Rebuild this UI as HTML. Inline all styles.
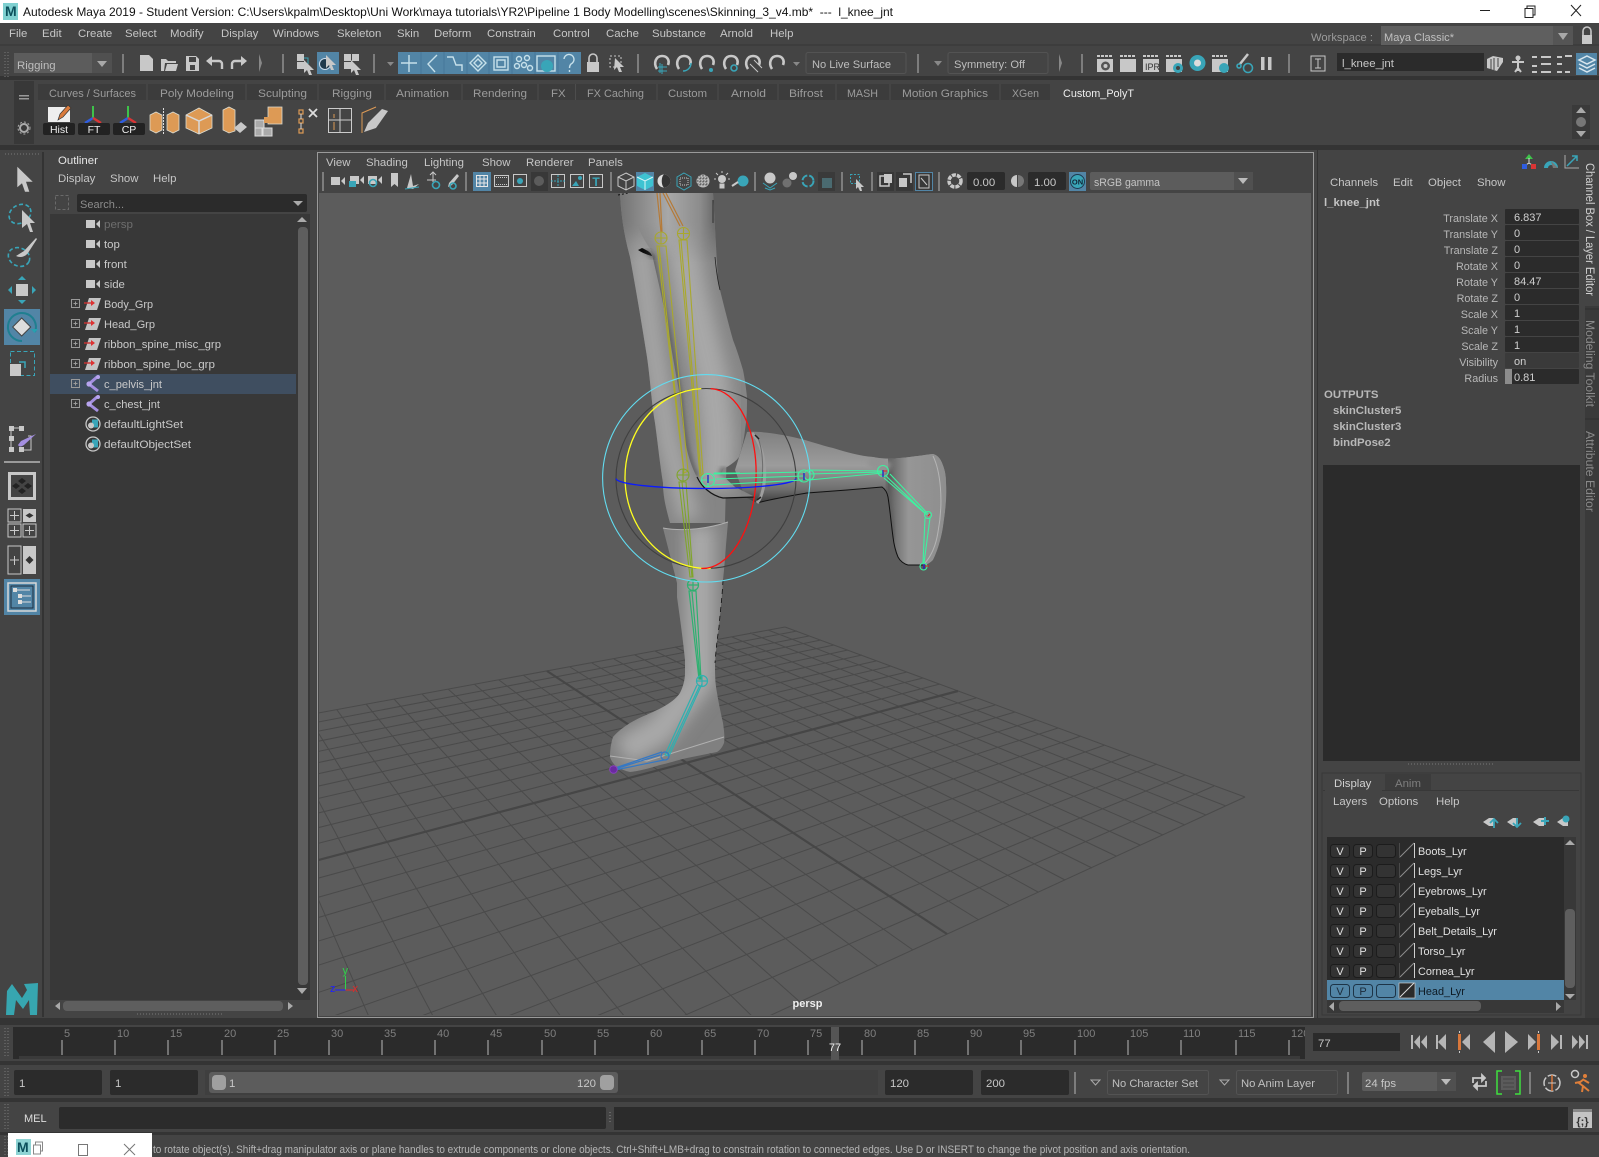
<!DOCTYPE html>
<html><head><meta charset="utf-8"><title>Autodesk Maya 2019</title>
<style>
html,body{margin:0;padding:0;background:#444;width:1599px;height:1157px;overflow:hidden}
svg{display:block;font-family:"Liberation Sans",sans-serif;font-size:11.4px}
.m{fill:#c6c6c6}.d{fill:#9b9b9b}.l{fill:#c9c9c9}
.i{fill:#c8c8c8}.s{fill:none;stroke:#c8c8c8;stroke-width:1.4}
.te{fill:#39a5b8}.ts{fill:none;stroke:#39a5b8;stroke-width:1.6}
.k{fill:#2b2b2b}.sep{fill:#7d7d7d}
</style></head><body>
<svg width="1599" height="1157" viewBox="0 0 1599 1157" xmlns="http://www.w3.org/2000/svg">
<defs>
<linearGradient id="gA" gradientUnits="userSpaceOnUse" x1="622" y1="0" x2="714" y2="0"><stop offset="0" stop-color="#767676"/><stop offset=".5" stop-color="#a8a8a8"/><stop offset=".85" stop-color="#8c8c8c"/><stop offset="1" stop-color="#6c6c6c"/></linearGradient>
<linearGradient id="gC" gradientUnits="userSpaceOnUse" x1="0" y1="435" x2="0" y2="503"><stop offset="0" stop-color="#838383"/><stop offset=".45" stop-color="#9c9c9c"/><stop offset=".8" stop-color="#6e6e6e"/><stop offset="1" stop-color="#3c3c3c"/></linearGradient>
<linearGradient id="gF" gradientUnits="userSpaceOnUse" x1="888" y1="0" x2="946" y2="0"><stop offset="0" stop-color="#5f5f5f"/><stop offset=".35" stop-color="#969696"/><stop offset="1" stop-color="#8e8e8e"/></linearGradient>
<linearGradient id="vf" gradientUnits="userSpaceOnUse" x1="0" y1="222" x2="0" y2="262"><stop offset="0" stop-color="#fff"/><stop offset="1" stop-color="#000"/></linearGradient>
<linearGradient id="vg" gradientUnits="userSpaceOnUse" x1="0" y1="455" x2="0" y2="490"><stop offset="0" stop-color="#000"/><stop offset="1" stop-color="#fff"/></linearGradient>
<mask id="fade" maskUnits="userSpaceOnUse" x="600" y="190" width="140" height="80"><rect x="600" y="190" width="140" height="80" fill="url(#vf)"/></mask>
<filter id="b8" x="-50%" y="-20%" width="200%" height="140%"><feGaussianBlur stdDeviation="8"/></filter>
<filter id="b3" x="-50%" y="-20%" width="200%" height="140%"><feGaussianBlur stdDeviation="2.5"/></filter>
<path id="pStand" d="M620 193C621 215 624 235 630 257C636 290 642 325 647 357C651 385 651 400 655 423C658 445 660 465 663 483C663 495 665 505 670 523L725 523L727 440L713 193Z"/>
<path id="pBent" d="M651 250C658 280 665 310 670 340C675 370 678 385 680 397C682 420 684 435 687 450C690 462 693 470 697 477C700 483 703 487 707 490C713 495 718 497 723 498L755 497L735 487L722 475C722 470 724 468 727 467C733 463 736 461 739 457C742 448 744 440 745 430C747 418 747 408 747 397C746 388 745 380 743 370C740 360 737 350 733 340C728 322 724 306 720 290C717 278 716 268 715 257C714 245 714 235 713 223L712 193L628 193C632 215 640 235 651 250Z"/>
<path id="pHoriz" d="M747 432C760 431 780 434 797 438C810 441 820 445 833 448C846 452 860 456 873 457C882 459 892 459 900 458C912 457 924 455 933 454C937 455 940 458 942 463C945 470 946 476 946 483C947 500 945 513 943 527C941 540 937 552 933 560C930 563 927 565 923 565L908 565C904 564 900 561 898 557C895 550 894 545 893 537C891 522 890 510 888 497C887 492 885 489 882 487C870 488 858 489 847 490C834 491 820 492 807 493C790 496 772 499 757 503L745 497L735 470Z"/>
<path id="pBoot" d="M663 528C685 532 710 528 728 522L726 545C725 560 724 570 723 580C722 600 720 613 719 627C717 640 716 650 715 663C715 675 715 682 717 693C719 705 721 714 723 723C724 730 725 737 724 743C722 748 720 750 717 752C707 754 697 756 687 758C678 760 669 763 660 765C650 768 640 771 630 772C625 771 621 769 617 767C613 764 611 760 610 757C610 750 611 743 613 737C618 731 624 727 630 723C640 717 652 713 663 707C670 703 676 699 680 693C683 687 685 680 685 673L685 660C683 640 680 618 677 597L677 583Z"/>
<clipPath id="cStand"><use href="#pStand"/></clipPath>
<clipPath id="cBent"><use href="#pBent"/></clipPath>
<clipPath id="cHoriz"><use href="#pHoriz"/></clipPath>
<clipPath id="cBoot"><use href="#pBoot"/></clipPath>
<clipPath id="vp"><rect x="319" y="193" width="992" height="822"/></clipPath>
<symbol id="cam" viewBox="0 0 14 10" overflow="visible"><rect x="0" y="1" width="9" height="8" fill="#c8c8c8"/><path d="M10 5l4-4v8z" fill="#c8c8c8"/></symbol>
<symbol id="grp" viewBox="0 0 16 12" overflow="visible"><path d="M4 0h12l-4 12H0z" fill="#c4c4c4"/><path d="M-1 5h10" stroke="#c33" stroke-width="1.4"/><path d="M6 2l4 3-4 3z" fill="#d33"/></symbol>
<symbol id="jnt" viewBox="0 0 14 18" overflow="visible"><path d="M11 2L3 9l9 7" fill="none" stroke="#a48fe0" stroke-width="3"/><circle cx="12" cy="2" r="2" fill="#b7a4ee"/><circle cx="3" cy="9" r="2.6" fill="#b7a4ee"/></symbol>
<symbol id="set" viewBox="0 0 16 16" overflow="visible"><circle cx="8" cy="8" r="7" fill="none" stroke="#c8c8c8" stroke-width="1.3"/><rect x="7" y="3.5" width="6" height="8" fill="#39a5b8"/><circle cx="6" cy="9.5" r="3" fill="#c8c8c8"/></symbol>
<symbol id="clap" viewBox="0 0 17 17" overflow="visible"><path d="M0 0h3v2H0zM4 0h3v2H4zM8 0h3v2H8zM12 0h3v2h-3z" fill="#c8c8c8"/><rect x="0" y="4" width="16" height="13" fill="#c8c8c8"/></symbol>
<symbol id="magnet" viewBox="0 0 16 18" overflow="visible"><path d="M3 14C-1 8 2 1 8 1c5 0 8 4 6 9" fill="none" stroke="#c8c8c8" stroke-width="2.6"/></symbol>
</defs>

<!-- base -->
<rect width="1599" height="1157" fill="#444"/>
<rect width="1599" height="23" fill="#fff"/>
<!-- title -->
<rect x="3" y="3" width="15" height="17" fill="#7fd0d0"/>
<text x="5" y="16" font-size="14" font-weight="bold" fill="#0b4f5b">M</text>
<text x="23" y="16" font-size="12" fill="#111" textLength="870" lengthAdjust="spacingAndGlyphs" xml:space="preserve">Autodesk Maya 2019 - Student Version: C:\Users\kpalm\Desktop\Uni Work\maya tutorials\YR2\Pipeline 1 Body Modelling\scenes\Skinning_3_v4.mb*  ---  l_knee_jnt</text>
<path d="M1480 10.500h10" stroke="#222"/>
<path d="M1525 8.500h8v9h-8zM1527 8.500v-2.500h8v9h-2" fill="none" stroke="#222"/>
<path d="M1571 5l10 11M1581 5l-10 11" stroke="#222" fill="none"/>

<!-- separators -->
<rect y="44" width="1599" height="2" fill="#3d3d3d"/>
<rect y="76" width="1599" height="4" fill="#343434"/>
<rect y="145" width="1599" height="5" fill="#343434"/>
<rect y="1018" width="1599" height="7" fill="#343434"/>
<rect y="1061" width="1599" height="4" fill="#343434"/>
<rect y="1098" width="1599" height="4" fill="#343434"/>
<rect y="1132" width="1599" height="3" fill="#343434"/>

<!-- menu -->
<g class="m">
<text x="9" y="37">File</text><text x="42" y="37">Edit</text><text x="78" y="37">Create</text><text x="125" y="37">Select</text><text x="170" y="37">Modify</text><text x="221" y="37">Display</text><text x="273" y="37">Windows</text><text x="337" y="37">Skeleton</text><text x="397" y="37">Skin</text><text x="434" y="37">Deform</text><text x="487" y="37">Constrain</text><text x="553" y="37">Control</text><text x="606" y="37">Cache</text><text x="652" y="37">Substance</text><text x="720" y="37">Arnold</text><text x="770" y="37">Help</text>
</g>
<text x="1311" y="41" class="d" textLength="62" lengthAdjust="spacingAndGlyphs">Workspace :</text>
<rect x="1381" y="26" width="192" height="19" fill="#5f5f5f"/><rect x="1553" y="26" width="20" height="19" fill="#555"/>
<text x="1384" y="41" fill="#c0c0c0" textLength="70" lengthAdjust="spacingAndGlyphs">Maya Classic*</text>
<path d="M1558 33h10l-5 7z" fill="#a8a8a8"/>
<path d="M1583 35v-4a4 4 0 0 1 8 0v4" fill="none" stroke="#c8c8c8" stroke-width="1.6"/><rect x="1582" y="35" width="10" height="9" class="i"/>

<!-- status line -->
<path d="M5 52v25M8 52v25" stroke="#777" stroke-dasharray="1 2"/>
<rect x="14" y="53" width="98" height="20" fill="#5c5c5c"/><rect x="92" y="53" width="20" height="20" fill="#505050"/>
<text x="17" y="69" fill="#bdbdbd">Rigging</text><path d="M97 61h10l-5 6z" fill="#a8a8a8"/>
<rect x="122" y="54" width="2" height="19" class="sep"/>
<path d="M140 55h9l4 4v12h-13z" class="i"/>
<path d="M161 71V59h5l2 2h8v2h-11l-1 8zM165 71l2-7h11l-2 7z" class="i"/>
<path d="M186 56h10l3 3v12h-13z" class="i"/><rect x="189" y="57" width="7" height="5" fill="#444"/><rect x="190" y="65" width="5" height="5" fill="#444"/>
<path d="M222 69v-5a3 3 0 0 0-3-3h-9" fill="none" stroke="#c8c8c8" stroke-width="2.4"/><path d="M212 56l-6 5 6 5z" class="i"/>
<path d="M232 69v-5a3 3 0 0 1 3-3h7" fill="none" stroke="#c8c8c8" stroke-width="2.4"/><path d="M241 56l6 5-6 5z" class="i"/>
<path d="M259 54l3 9-3 9z" fill="#888"/>
<rect x="282" y="54" width="2" height="19" class="sep"/>
<rect x="297" y="54" width="7" height="7" class="i"/><rect x="297" y="62" width="7" height="7" class="i"/><path d="M304 58h4v6" fill="none" stroke="#39a5b8"/><path d="M304 60l10 10h-4l2 5h-3l-2-5-3 3z" class="i"/>
<rect x="317" y="52" width="22" height="22" fill="#5285a6"/><circle cx="325" cy="64" r="5.500" fill="#1f3a4d" stroke="#cde" /><path d="M326 55l10 10h-4l2 5h-3l-2-5-3 3z" class="i"/>
<rect x="344" y="54" width="7" height="7" class="i"/><rect x="352" y="54" width="7" height="7" class="i"/><rect x="344" y="62" width="7" height="7" class="i"/><path d="M351 60l10 10h-4l2 5h-3l-2-5-3 3z" class="i"/>
<rect x="373" y="54" width="2" height="19" class="sep"/>
<path d="M387 62h7l-3.500 4z" fill="#888"/>
<rect x="398" y="52" width="183" height="22" fill="#5285a6"/>
<path d="M421 52v22M444 52v22M467 52v22M489 52v22M512 52v22M535 52v22M558 52v22" stroke="#47769a"/>
<g fill="none" stroke="#c6e0ea" stroke-width="1.400">
<path d="M409 55v17M401 63h16"/>
<path d="M437 55l-9 9 7 8"/>
<path d="M447 57h6l3 8h6v6"/>
<path d="M478 55l8 8-8 8-8-8zM478 59l4 4-4 4-4-4z"/>
<rect x="494" y="57" width="14" height="13"/><path d="M497 60h8v7h-8z"/>
<circle cx="519" cy="59" r="2.500"/><circle cx="527" cy="58" r="2.500"/><circle cx="517" cy="66" r="2.500"/><circle cx="524" cy="65" r="2.500"/><circle cx="530" cy="68" r="2.500"/>
<rect x="537" y="56" width="18" height="15"/>
<path d="M564 59a5 5 0 1 1 7 5c-1 1-1.500 2-1.500 4M569.500 70v2"/>
</g>
<circle cx="547" cy="66" r="6" fill="#39a5b8"/>
<path d="M589 62v-4a4 4 0 0 1 8 0v4" fill="none" stroke="#c8c8c8" stroke-width="1.600"/><rect x="587" y="62" width="12" height="10" class="i"/>
<rect x="610" y="56" width="11" height="11" fill="none" stroke="#c8c8c8" stroke-dasharray="2 2"/><path d="M615 58l9 9h-4l2 5h-3l-2-5-3 3z" class="i"/>
<rect x="637" y="54" width="2" height="19" class="sep"/>
<use href="#magnet" x="654" y="55" width="16" height="18"/><path d="M662 64v10M658 67h9M658 71h9M660 63v10" stroke="#39a5b8" fill="none"/>
<use href="#magnet" x="676" y="55" width="16" height="18"/><path d="M683 71c5 0 8-4 8-8" stroke="#39a5b8" fill="none" stroke-width="1.500"/>
<use href="#magnet" x="699" y="55" width="16" height="18"/><circle cx="711" cy="70" r="2" class="te"/>
<use href="#magnet" x="723" y="55" width="16" height="18"/><circle cx="734" cy="68" r="3" class="ts"/>
<use href="#magnet" x="745" y="55" width="16" height="18"/><path d="M750 64l8 8M754 60l8 8" stroke="#c8c8c8"/>
<use href="#magnet" x="769" y="55" width="16" height="18"/>
<path d="M793 62h7l-3.500 4z" fill="#888"/>
<rect x="806" y="52.500" width="100" height="21" rx="2" fill="none" stroke="#535353"/>
<text x="812" y="68" fill="#bdbdbd" textLength="79" lengthAdjust="spacingAndGlyphs">No Live Surface</text>
<rect x="917" y="54" width="2" height="19" class="sep"/><path d="M934 61h8l-4 5z" fill="#888"/>
<rect x="948" y="52.500" width="100" height="21" rx="2" fill="none" stroke="#535353"/>
<text x="954" y="68" fill="#bdbdbd" textLength="71" lengthAdjust="spacingAndGlyphs">Symmetry: Off</text>
<path d="M1059 54l3 9-3 9z" fill="#888"/>
<rect x="1081" y="54" width="2" height="19" class="sep"/>
<use href="#clap" x="1097" y="55" width="17" height="17"/><circle cx="1105.500" cy="66" r="4.500" fill="#555"/><circle cx="1105.500" cy="66" r="2" class="i"/>
<use href="#clap" x="1120" y="55" width="17" height="17"/>
<use href="#clap" x="1143" y="55" width="17" height="17"/><text x="1145" y="70" font-size="9" fill="#333">IPR</text>
<use href="#clap" x="1166" y="55" width="17" height="17"/><circle cx="1178" cy="68" r="5" fill="#39a5b8"/><circle cx="1178" cy="68" r="2" fill="#444"/>
<circle cx="1197.500" cy="63" r="8" class="te"/><circle cx="1197.500" cy="63" r="3.500" fill="#ddd"/>
<use href="#clap" x="1212" y="55" width="17" height="17"/><circle cx="1224" cy="68" r="5" class="te"/>
<path d="M1248 54l-8 10" stroke="#c8c8c8" stroke-width="2.500"/><circle cx="1248" cy="68" r="4.500" class="ts"/><circle cx="1239" cy="66" r="2" class="ts"/>
<rect x="1261" y="57" width="3.500" height="13" class="i"/><rect x="1268" y="57" width="3.500" height="13" class="i"/>
<rect x="1288" y="54" width="2" height="19" class="sep"/>
<rect x="1311" y="56" width="14" height="15" fill="none" stroke="#c8c8c8"/><path d="M1315 59h6M1318 59v9M1315 68h6" stroke="#c8c8c8"/>
<rect x="1337" y="53" width="147" height="18" fill="#2b2b2b"/><text x="1342" y="67" fill="#c8c8c8">l_knee_jnt</text>
<path d="M1487 59l6-3 10 2v4l-6 9-10-3z" class="i"/><path d="M1491 59v11M1494 58v12M1498 58v9" stroke="#444"/>
<circle cx="1518" cy="58" r="2.500" class="i"/><path d="M1518 60v11M1512 62h12M1515 72l3-4 3 4" stroke="#c8c8c8" stroke-width="2" fill="none"/>
<path d="M1532 57h5M1532 66h5M1532 72h5M1541 57h10M1541 64h10M1541 72h10" stroke="#c8c8c8" fill="none" stroke-width="2"/>
<path d="M1557 57h5M1557 64h5M1557 72h5M1565 56h7M1565 72h5" stroke="#c8c8c8" fill="none" stroke-width="2"/>
<rect x="1576" y="53" width="21" height="22" fill="#5285a6"/><path d="M1587 56l8 4-8 4-8-4zM1579 64l8 4 8-4M1579 68l8 4 8-4" fill="none" stroke="#d8e6ee" stroke-width="1.500"/>

<!-- shelf -->
<rect x="38" y="84" width="1014" height="16" fill="#3c3c3c"/>
<rect x="1052" y="84" width="92" height="16" fill="#444"/>
<path d="M147 84v16M246 84v16M318 84v16M385 84v16M462 84v16M538 84v16M575.500 84v16M657 84v16M718 84v16M778 84v16M836 84v16M890 84v16M1000 84v16M1051 84v16" stroke="#4d4d4d"/>
<rect x="14" y="81" width="20" height="63" fill="#383838"/>
<rect x="19" y="95" width="10" height="1.500" fill="#999"/><rect x="19" y="98" width="10" height="1.500" fill="#999"/>
<circle cx="24" cy="128" r="4" fill="none" stroke="#aaa" stroke-width="2"/><circle cx="24" cy="128" r="6" fill="none" stroke="#aaa" stroke-dasharray="2 2"/>
<g class="d">
<text x="49" y="97" textLength="87" lengthAdjust="spacingAndGlyphs">Curves / Surfaces</text><text x="160" y="97" textLength="74" lengthAdjust="spacingAndGlyphs">Poly Modeling</text><text x="258" y="97" textLength="49" lengthAdjust="spacingAndGlyphs">Sculpting</text><text x="332" y="97" textLength="40" lengthAdjust="spacingAndGlyphs">Rigging</text><text x="396" y="97" textLength="53" lengthAdjust="spacingAndGlyphs">Animation</text><text x="473" y="97" textLength="54" lengthAdjust="spacingAndGlyphs">Rendering</text><text x="551" y="97">FX</text><text x="587" y="97" textLength="57" lengthAdjust="spacingAndGlyphs">FX Caching</text><text x="668" y="97" textLength="39" lengthAdjust="spacingAndGlyphs">Custom</text><text x="731" y="97" textLength="35" lengthAdjust="spacingAndGlyphs">Arnold</text><text x="789" y="97" textLength="34" lengthAdjust="spacingAndGlyphs">Bifrost</text><text x="847" y="97" textLength="31" lengthAdjust="spacingAndGlyphs">MASH</text><text x="902" y="97" textLength="86" lengthAdjust="spacingAndGlyphs">Motion Graphics</text><text x="1012" y="97" textLength="27" lengthAdjust="spacingAndGlyphs">XGen</text>
</g>
<text x="1063" y="97" fill="#eee" textLength="71" lengthAdjust="spacingAndGlyphs">Custom_PolyT</text>
<path d="M48 107h22v15H48z" fill="#eee"/><path d="M58 120l2-6 8-9 3 3-8 9z" fill="#d97a3c" stroke="#333" stroke-width=".7"/>
<rect x="43" y="123" width="32" height="12" rx="2" fill="#222"/><text x="59" y="133" text-anchor="middle" font-size="10.500" fill="#eee">Hist</text>
<path d="M93 106v12" stroke="#3ec24a" stroke-width="2"/><path d="M93 118l-8 5" stroke="#2f5de0" stroke-width="2.500"/><path d="M93 118l8 5" stroke="#d93535" stroke-width="2.500"/>
<rect x="78" y="123" width="32" height="12" rx="2" fill="#222"/><text x="94" y="133" text-anchor="middle" font-size="10.500" fill="#eee">FT</text>
<path d="M128 106v12" stroke="#3ec24a" stroke-width="2"/><path d="M128 118l-8 5" stroke="#2f5de0" stroke-width="2.500"/><path d="M128 118l8 5" stroke="#d93535" stroke-width="2.500"/>
<rect x="113" y="123" width="32" height="12" rx="2" fill="#222"/><text x="129" y="133" text-anchor="middle" font-size="10.500" fill="#eee">CP</text>
<g fill="#dd9a55" stroke="#dddcd0" stroke-width=".8">
<path d="M150 115l6-3 6 3v15l-6 3-6-3zM167 115l6-3 6 3v15l-6 3-6-3z"/>
<path d="M199 108l13 7v13l-13 6-13-6v-13z"/>
<path d="M223 110l6-3 6 3v21l-6 2-6-3z"/>
<path d="M268 107h14v17h-14z"/>
</g>
<path d="M163.500 108v27" stroke="#ddd" stroke-dasharray="2 1"/>
<path d="M186 115l13 6 13-6M199 121v13" fill="none" stroke="#d8d8d8" stroke-width="1.500"/>
<path d="M234 128l7-6 6 5-7 6z" class="i"/>
<path d="M255 120h9v8h-9zM263 128h9v8h-9zM255 128h7v8h-7z" fill="#aaa" stroke="#ddd"/><rect x="264" y="117" width="6" height="6" fill="#dd9a55"/>
<rect x="299" y="110" width="4" height="4" fill="none" stroke="#dd9a55" stroke-width="1.200"/><rect x="299" y="119" width="4" height="4" fill="none" stroke="#dd9a55" stroke-width="1.200"/><rect x="299" y="129" width="4" height="4" fill="none" stroke="#dd9a55" stroke-width="1.200"/><path d="M301 114v5M301 123v6" stroke="#ddd"/>
<path d="M309 109l8 8M317 109l-8 8" stroke="#ddd" stroke-width="1.800"/>
<rect x="328.500" y="108.500" width="23" height="24" fill="none" stroke="#ccc"/><path d="M340 108v25M329 120h22" stroke="#ccc"/><path d="M334 114v4M334 122v8" stroke="#dd9a55"/>
<path d="M362 133v-20l14-6" fill="none" stroke="#dd9a55"/><path d="M364 132l4-9 14-14 6 2-12 17z" class="i"/>
<rect x="1572" y="105" width="18" height="34" fill="#3a3a3a"/><path d="M1581 107l-5 6h10zM1581 137l-5-6h10z" fill="#aaa"/><circle cx="1581" cy="122" r="5" fill="#777"/>

<!-- Left toolbox -->
<path d="M5 154h35" stroke="#777" stroke-dasharray="1 2"/>
<path d="M17.300 166.700L32.700 181.700H26L29.300 191.700H25L22 183.300L17.300 187.300z" class="i"/>
<ellipse cx="20" cy="214" rx="11.500" ry="9" transform="rotate(-30 20 214)" class="ts" stroke-dasharray="4 2.500"/><path d="M22 210l13 13h-5l3 9h-3l-3-8-5 4z" class="i"/>
<ellipse cx="19" cy="257" rx="11" ry="9" transform="rotate(25 19 257)" class="ts" stroke-dasharray="4 2.500"/><path d="M16 256l8-5 12-13 1 1-9 14c-3 4-8 5-12 3z" class="i"/>
<rect x="16" y="284" width="12" height="12" class="i"/><path d="M22 276l4 4h-8zM22 304l4-4h-8zM8 290l4-4v8zM36 290l-4-4v8z" class="te"/>
<rect x="4" y="309" width="36" height="36" fill="#5285a6"/><path d="M22 341a14 14 0 1 1 13-9" fill="none" stroke="#1f7f90" stroke-width="2"/><path d="M21.700 318l9 9-9 9-9-9z" fill="#ddd" stroke="#444"/><path d="M31 329h7l-3.500 4z" fill="#27a0b0"/>
<rect x="10.500" y="351.500" width="24" height="24" fill="none" stroke="#39a5b8" stroke-dasharray="4 2.500"/><rect x="10" y="364" width="11" height="12" class="i"/><path d="M19 362h6v6" fill="none" stroke="#39a5b8" stroke-width="1.500"/>
<g class="i"><rect x="9" y="426" width="5" height="5"/><rect x="19" y="426" width="5" height="5"/><rect x="9" y="436" width="5" height="5"/><rect x="9" y="447" width="5" height="5"/><rect x="19" y="447" width="5" height="5"/></g>
<path d="M14 428h5M11 431v5M11 441v6M28 436h3v14h-7" stroke="#c8c8c8" fill="none"/>
<path d="M36 434l-12 11c-3 2-5 2-6 0l3-4z" fill="#a48fe0"/>
<rect x="4" y="461" width="36" height="2" fill="#9a9a9a"/>
<rect x="8" y="472" width="28" height="28" class="i"/><rect x="11" y="475" width="22" height="22" fill="#444"/><path d="M22 478l4 3-4 3-4-3zM16 483l4 3-4 3-4-3zM28 483l4 3-4 3-4-3zM22 488l4 3-4 3-4-3z" fill="#222"/>
<rect x="8" y="509" width="13" height="13" fill="none" stroke="#c8c8c8"/><rect x="23" y="509" width="13" height="13" class="i"/><rect x="8" y="524" width="13" height="13" fill="none" stroke="#c8c8c8"/><rect x="23" y="524" width="13" height="13" fill="none" stroke="#c8c8c8"/><path d="M10 515.500h9M14.500 511v9M10 530.500h9M14.500 526v9M25 530.500h9M29.500 526v9" stroke="#c8c8c8"/><path d="M29.500 513l4 2.500-4 2.500-4-2.500z" fill="#333"/>
<rect x="8" y="546" width="13" height="28" fill="none" stroke="#c8c8c8"/><rect x="23" y="546" width="13" height="28" class="i"/><path d="M10 560h9M14.500 556v9" stroke="#c8c8c8"/><path d="M29.500 556l4 4-4 4-4-4z" fill="#333"/>
<rect x="4" y="579" width="36" height="36" fill="#5285a6"/><rect x="8" y="583" width="28" height="28" fill="none" stroke="#d8d8d8" stroke-width="1.500"/><rect x="11" y="586" width="22" height="22" fill="none" stroke="#1d2f40"/><rect x="13" y="588" width="4" height="4" fill="#ddd"/><rect x="18" y="594" width="4" height="4" fill="#ddd"/><rect x="18" y="600" width="4" height="4" fill="#ddd"/><path d="M17 590h13M22 596h9M22 602h9" stroke="#ddd"/>
<path d="M6 1015l1-24 5-7 10 14 5-8-3-6 14-1-1 32h-7l-1-15-6 9-7-9-2 15z" fill="#37a6b0"/>
<path d="M43 152v865" stroke="#333" stroke-width="2"/>

<!-- Outliner -->
<rect x="46" y="167" width="266" height="850" fill="#444"/>
<rect x="48" y="151" width="64" height="17" fill="#444"/>
<text x="58" y="164" fill="#e6e6e6">Outliner</text>
<g class="m"><text x="58" y="182">Display</text><text x="110" y="182">Show</text><text x="153" y="182">Help</text></g>
<rect x="55.500" y="195.500" width="13" height="14" fill="none" stroke="#6a6a6a" stroke-dasharray="3 2"/>
<rect x="77" y="194" width="230" height="18" rx="2" fill="#2b2b2b"/>
<text x="80" y="208" fill="#8c8c8c" font-size="11">Search...</text><path d="M293 201h10l-5 5z" fill="#aaa"/>
<rect x="50" y="214" width="260" height="786" fill="#383838"/>
<rect x="50" y="374" width="246" height="20" fill="#3f4e60"/>
<path d="M302 217l-5 5h10z" fill="#aaa"/>
<rect x="298" y="227" width="10" height="758" rx="4" fill="#5e5e5e"/>
<path d="M297 988h10l-5 6z" fill="#aaa"/>
<rect x="50" y="1000" width="260" height="13" fill="#444"/>
<path d="M60 1002v8l-5-4zM288 1002v8l5-4z" fill="#aaa"/>
<rect x="63" y="1001" width="220" height="10" rx="4" fill="#5e5e5e"/>
<path d="M137 1014h85" stroke="#777" stroke-dasharray="1 2"/>
<use href="#cam" x="86" y="219" width="14" height="10"/><use href="#cam" x="86" y="239" width="14" height="10"/><use href="#cam" x="86" y="259" width="14" height="10"/><use href="#cam" x="86" y="279" width="14" height="10"/>
<use href="#grp" x="85" y="298" width="16" height="12"/><use href="#grp" x="85" y="318" width="16" height="12"/><use href="#grp" x="85" y="338" width="16" height="12"/><use href="#grp" x="85" y="358" width="16" height="12"/>
<use href="#jnt" x="86" y="375" width="14" height="18"/><use href="#jnt" x="86" y="395" width="14" height="18"/>
<use href="#set" x="85" y="416" width="16" height="16"/><use href="#set" x="85" y="436" width="16" height="16"/>
<g fill="none" stroke="#9a9a9a">
<path d="M71.500 299.500h8v8h-8zM73.500 303.500h4M75.500 301.500v4M71.500 319.500h8v8h-8zM73.500 323.500h4M75.500 321.500v4M71.500 339.500h8v8h-8zM73.500 343.500h4M75.500 341.500v4M71.500 359.500h8v8h-8zM73.500 363.500h4M75.500 361.500v4M71.500 379.500h8v8h-8zM73.500 383.500h4M75.500 381.500v4M71.500 399.500h8v8h-8zM73.500 403.500h4M75.500 401.500v4"/>
</g>
<text x="104" y="228" fill="#6e6e6e" textLength="29" lengthAdjust="spacingAndGlyphs">persp</text>
<g class="l"><text x="104" y="248">top</text><text x="104" y="268">front</text><text x="104" y="288">side</text><text x="104" y="308" textLength="49" lengthAdjust="spacingAndGlyphs">Body_Grp</text><text x="104" y="328" textLength="51" lengthAdjust="spacingAndGlyphs">Head_Grp</text><text x="104" y="348" textLength="117" lengthAdjust="spacingAndGlyphs">ribbon_spine_misc_grp</text><text x="104" y="368" textLength="111" lengthAdjust="spacingAndGlyphs">ribbon_spine_loc_grp</text><text x="104" y="388" textLength="58" lengthAdjust="spacingAndGlyphs">c_pelvis_jnt</text><text x="104" y="408" textLength="56" lengthAdjust="spacingAndGlyphs">c_chest_jnt</text><text x="104" y="428" textLength="79" lengthAdjust="spacingAndGlyphs">defaultLightSet</text><text x="104" y="448" textLength="87" lengthAdjust="spacingAndGlyphs">defaultObjectSet</text></g>

<!-- Viewport frame -->
<rect x="317.500" y="152.500" width="996" height="865" fill="#444" stroke="#9a9a9a"/>
<g class="m"><text x="326" y="166">View</text><text x="366" y="166">Shading</text><text x="424" y="166">Lighting</text><text x="482" y="166">Show</text><text x="526" y="166">Renderer</text><text x="588" y="166">Panels</text></g>
<rect x="319" y="193" width="992" height="823" fill="#5c5c5c"/>

<g clip-path="url(#vp)">
<!-- grid -->
<path fill="none" stroke="#4a4a4a" stroke-width="1" d="
M785 627L210 733M797 631L213 742M809 636L216 751M821 640L220 761M834 645L223 771M848 650L227 782M862 655L230 793M876 661L234 805M891 666L238 817M907 672L243 831M923 678L248 845M940 684L253 860M976 698L264 893M995 705L270 911M1015 712L276 930M1036 720L283 952M1058 728L291 974M1081 736L299 999M1105 745L308 1025M1130 755L318 1054M1157 764L328 1086M1185 775L340 1121M1214 786L353 1159M1245 797L367 1201
M785 627L1245 797M768 630L1226 806M750 633L1206 815M732 637L1185 825M714 640L1163 835M695 644L1140 845M675 647L1116 856M655 651L1092 868M635 655L1065 880M614 659L1038 892M592 663L1009 905M570 667L979 920M523 675L913 950M499 680L878 966M474 684L840 983M448 689L800 1002M422 694L757 1021M394 699L712 1042M366 704L664 1064M337 710L613 1088M307 715L558 1113M276 721L499 1140M244 727L435 1170M210 733L367 1201"/>
<path fill="none" stroke="#464646" stroke-width="2.200" d="M958 691L258 876M547 671L947 934"/>

<!-- standing thigh and knee -->
<use href="#pStand" fill="#858585"/>
<g clip-path="url(#cStand)"><path d="M638 230L652 340L668 440L690 520" fill="none" stroke="#a6a6a6" stroke-width="22" filter="url(#b8)"/></g>
<!-- horizontal boot -->
<use href="#pHoriz" fill="url(#gC)"/>
<g clip-path="url(#cHoriz)">
<rect x="888" y="440" width="62" height="130" fill="url(#gF)"/>
<path d="M889 470L888 500L893 540" fill="none" stroke="#5a5a5a" stroke-width="4" filter="url(#b3)"/>
<path d="M870 458L888 470" stroke="#939393" stroke-width="14" filter="url(#b3)"/>
</g>
<path d="M933 456C940 470 944 500 938 532C936 545 932 555 925 563" fill="none" stroke="#b4b4b4"/>
<path d="M757 503C772 499 790 496 807 493C820 492 834 491 847 490C858 489 870 488 882 487C885 489 887 492 888 497C890 510 891 522 893 537C894 545 895 550 898 557C900 561 904 564 908 565L923 565" fill="none" stroke="#111" stroke-width="1"/>
<path d="M752 433C768 450 768 490 757 503" fill="none" stroke="#9e9e9e" stroke-width="3"/>
<path d="M757 436c6 12 8 36 2 62" fill="none" stroke="#6d6d6d"/>
<path d="M755 435l4 4M757 500l4-3" stroke="#222" stroke-width="1.500"/>
<!-- bent thigh -->
<use href="#pBent" fill="#858585"/>
<g clip-path="url(#cBent)">
<path d="M672 193L690 290L712 380L718 440L716 490" fill="none" stroke="#a8a8a8" stroke-width="34" filter="url(#b8)"/>
<path d="M720 470L740 480L755 492" fill="none" stroke="#6d6d6d" stroke-width="8" filter="url(#b3)"/>
<path d="M652 256C658 285 665 315 670 340C675 370 678 385 680 397C682 420 684 435 687 450C690 462 693 470 697 477" fill="none" stroke="#5e5e5e" stroke-width="5" filter="url(#b3)"/>
</g>
<g mask="url(#fade)"><use href="#pStand" fill="url(#gA)"/></g>
<path d="M642 248c4 2 9 4 10 8c-4-1-10-3-14-6z" fill="#0c0c0c"/>
<path d="M646 250l8 8" stroke="#333" stroke-width="2" filter="url(#b3)"/>
<path d="M713 200L713 223M715 257C716 268 717 278 720 290" fill="none" stroke="#222" stroke-width=".8"/>
<path d="M618 195l15-3" stroke="#111" stroke-dasharray="2 2"/>
<path d="M697 477C700 483 703 487 707 490C713 495 718 497 723 498L755 497" fill="none" stroke="#151515" stroke-width="1.200"/>
<!-- standing boot -->
<use href="#pBoot" fill="#808080"/>
<g clip-path="url(#cBoot)">
<path d="M700 525L700 680L660 730L622 752" fill="none" stroke="#a9a9a9" stroke-width="30" filter="url(#b8)"/>
</g>
<path d="M610 756L647 761L724 737" fill="none" stroke="#b0b0b0" stroke-width="1"/>
<path d="M723 580C722 600 720 613 719 627C717 640 716 650 715 663" fill="none" stroke="#111" stroke-width=".8" stroke-dasharray="5 4"/>
<path d="M663 528C685 532 710 528 728 522" fill="none" stroke="#b0b0b0"/>

<!-- skeleton -->
<g fill="none" stroke="#b57a37" stroke-width="1.200">
<path d="M657 193L661 232M663 193L680 226M666 193L683 226M660 193L662 232"/>
</g>
<g fill="none" stroke="#a9a82c" stroke-width="1.100">
<circle cx="661" cy="238" r="6"/><path d="M655 238h12M661 232v12"/>
<circle cx="683.500" cy="233.500" r="6"/><path d="M677.500 233.500h12M683.500 227.500v12"/>
<path d="M657 246h9l22 225-4 2zM659 246l25 225"/>
<path d="M679 240h8l16 234-3 2zM681 240l20 234"/>
</g>
<g fill="none" stroke="#80a52c" stroke-width="1.100">
<circle cx="683" cy="475" r="6"/><path d="M677 475h12M683 469v12"/>
<path d="M679 482h7l7 95h-3zM682 482l10 95"/>
</g>
<g fill="none" stroke="#2eb070" stroke-width="1.200">
<circle cx="693" cy="585" r="5.500"/><path d="M687.500 585h11M693 579.500v11"/>
<path d="M689 591h7l5 88h-2zM692 592l8 87"/>
</g>
<g fill="none" stroke="#2fb0b0" stroke-width="1.200">
<circle cx="702" cy="681" r="5.500"/><path d="M696.500 681h11M702 675.500v11"/>
<path d="M697 685l-32 70 4 1 33-72M700 685l-33 71"/>
</g>
<g fill="none" stroke="#3578c4" stroke-width="1.200">
<circle cx="665" cy="756" r="4"/><path d="M662 752L615 768M664 760L615 770M660 755L615 769"/>
</g>
<circle cx="613.500" cy="769.500" r="3.800" fill="#6a2aa0" stroke="#8a40c0"/>
<!-- gimbal -->
<ellipse cx="706" cy="478.500" rx="90" ry="90" fill="none" stroke="#404040" stroke-width="1.100"/>
<path d="M706 388.500a81 90 0 0 0 0 180" fill="none" stroke="#ffff20" stroke-width="1.300" transform="rotate(-3 706 478)"/>
<path d="M706 388.500a50 90 0 0 1 0 180" fill="none" stroke="#ff1010" stroke-width="1.300" transform="rotate(3 706 478)"/>
<path d="M616 478.500a90 10 0 0 0 180 0" fill="none" stroke="#0a1aff" stroke-width="1.300"/>
<circle cx="706.300" cy="478.300" r="103.700" fill="none" stroke="#62dcf0" stroke-width="1.100"/>
<g fill="none" stroke="#3df2a0" stroke-width="1.100">
<circle cx="708" cy="480" r="6.500"/><path d="M701.500 480h13M708 473.500v13"/>
<circle cx="804" cy="476" r="6"/><circle cx="809" cy="475" r="5"/>
<path d="M713 474L804 472M713 485L803 480M716 479L803 476M714 473L740 473"/>
<path d="M809 470L883 471M809 480L883 473M809 474L883 472"/>
<circle cx="883" cy="471" r="5.500"/>
<path d="M884 478L927 515M890 474L928 514M886 476L927 515"/>
<circle cx="928" cy="515" r="3.500"/>
<path d="M925 518L923 563M930 518L924 563"/>
<circle cx="923.500" cy="566.500" r="3.500"/>
</g>
<path d="M708 475v8M804 473v7M883 470v7M924 564v5" stroke="#1018d0" stroke-width="1.200"/>
<path d="M883 471h4M928 516l2-2M925 566h4" stroke="#e02020"/>
<!-- axis -->
<path d="M345.500 990V976" stroke="#2fd24a"/><path d="M345.500 990H354" stroke="#e02a2a"/><path d="M345.500 990H335" stroke="#2020ff"/>
<text x="342.500" y="974" font-size="11" fill="#2fd24a">y</text><text x="352.500" y="992" font-size="11" fill="#e02a2a">x</text><text x="330" y="992" font-size="11" fill="#2020ff">z</text>
<text x="807.500" y="1007" text-anchor="middle" font-size="11" font-weight="bold" fill="#eee">persp</text>
</g>

<!-- viewport toolbar -->
<rect x="322" y="172" width="2" height="19" class="sep"/>
<use href="#cam" x="331" y="176" width="14" height="10"/>
<use href="#cam" x="350" y="175" width="14" height="10"/><rect x="349" y="181" width="7" height="6" class="te"/>
<use href="#cam" x="368" y="175" width="14" height="10"/><circle cx="373" cy="183" r="3.500" class="ts"/>
<path d="M391 173h7v14l-3.500-3-3.500 3z" class="i"/>
<path d="M407 188l4-14 2 12 6-2-6 5z" class="i"/><path d="M405 189l14-2" stroke="#39a5b8"/>
<path d="M433 172v10M430 175l3-3 3 3M427 180h9" stroke="#c8c8c8" fill="none"/><circle cx="436" cy="185" r="3.500" class="ts"/>
<path d="M457 174l-8 9-1 4 4-2 7-9z" class="i"/><circle cx="453" cy="186" r="3" class="ts"/>
<rect x="465" y="172" width="2" height="19" class="sep"/>
<rect x="473" y="172" width="18" height="19" fill="#5285a6"/><rect x="476.500" y="175.500" width="11" height="11" fill="none" stroke="#e8e8e8"/><path d="M480 175v11M484 175v11M476 179h11M476 183h11" stroke="#e8e8e8"/>
<rect x="494.500" y="175.500" width="14" height="11" fill="none" stroke="#c8c8c8"/><path d="M494 177.500h15M494 184.500h15" stroke="#c8c8c8" stroke-dasharray="1 1"/>
<rect x="513.500" y="174.500" width="13" height="12" fill="none" stroke="#c8c8c8"/><circle cx="520" cy="181" r="3" class="te"/>
<rect x="531" y="172" width="17" height="19" fill="#383838"/><circle cx="539" cy="181" r="5" fill="#5c5c5c"/>
<rect x="551.500" y="174.500" width="13" height="13" fill="none" stroke="#c8c8c8"/><path d="M551 181h14M558 175v12" stroke="#39a5b8" stroke-dasharray="2 1"/>
<rect x="570.500" y="174.500" width="13" height="13" fill="none" stroke="#c8c8c8"/><path d="M572 186l4-5 3 5z" class="te"/><circle cx="580" cy="178" r="2" class="te"/>
<rect x="589.500" y="174.500" width="13" height="13" fill="none" stroke="#c8c8c8"/><text x="596" y="186" text-anchor="middle" font-size="12" font-weight="bold" fill="#39a5b8">T</text>
<rect x="610" y="172" width="2" height="19" class="sep"/>
<path d="M626 173l8 4v9l-8 4-8-4v-9zM618 177l8 4 8-4M626 181v9" fill="none" stroke="#c8c8c8"/>
<rect x="636" y="172" width="18" height="19" fill="#5285a6"/><path d="M645 173l8 4v9l-8 4-8-4v-9z" fill="#3ec3d2"/><path d="M637 177l8 4 8-4M645 181v9" fill="none" stroke="#d8f4f8"/>
<circle cx="664" cy="181" r="6.500" fill="#ddd"/><path d="M664 174.500a6.500 6.500 0 0 1 0 13c-3-2-3-11 0-13z" fill="#333"/>
<path d="M684 173l7 4v9l-7 4-7-4v-9z" fill="none" stroke="#39a5b8"/><path d="M680 178h8v7h-8z" fill="none" stroke="#c8c8c8" stroke-dasharray="1 1"/>
<circle cx="703" cy="181" r="6.500" fill="#bbb"/><path d="M697 178h12M697 181h12M697 184h12M700 175v12M703 175v12M706 175v12" stroke="#444" stroke-dasharray="1.500 1.500"/>
<circle cx="722" cy="179" r="4" class="i"/><path d="M720 184h4v4h-4zM714 179h2M728 179h2M716 173l2 2M728 173l-2 2M722 171v2" stroke="#c8c8c8" fill="#c8c8c8"/>
<circle cx="743" cy="181" r="5.500" class="te"/><path d="M732 186l6-4" stroke="#c8c8c8" stroke-width="2"/>
<rect x="754" y="172" width="2" height="19" class="sep"/>
<circle cx="770" cy="178" r="5.500" class="i"/><path d="M763 183l7 5 7-5M765 188l5 2 5-2" stroke="#39a5b8" fill="none"/>
<circle cx="793" cy="176" r="4" class="i"/><circle cx="787" cy="183" r="4.500" fill="#707070"/>
<circle cx="808" cy="181" r="5.500" fill="none" stroke="#39a5b8" stroke-width="2" stroke-dasharray="7 2"/>
<rect x="818" y="172" width="17" height="19" fill="#3a3a3a"/><rect x="822" y="178" width="10" height="10" fill="#4a6a70"/>
<rect x="841" y="172" width="2" height="19" class="sep"/>
<rect x="850.500" y="174.500" width="9" height="9" fill="none" stroke="#39a5b8" stroke-dasharray="2 1.500"/><path d="M856 179l8 8h-3l1 4h-2l-2-4-2 2z" class="i"/>
<rect x="871" y="172" width="2" height="19" class="sep"/>
<rect x="877" y="172" width="17" height="19" fill="#383838"/><rect x="880" y="176" width="9" height="10" fill="none" stroke="#c8c8c8" stroke-width="1.500"/><rect x="884" y="174" width="8" height="9" class="i"/>
<rect x="896" y="172" width="17" height="19" fill="#383838"/><rect x="899" y="178" width="8" height="9" class="i"/><path d="M903 174h8v9" fill="none" stroke="#c8c8c8" stroke-width="1.500"/>
<rect x="915.500" y="172.500" width="17" height="18" fill="#383838" stroke="#5285a6"/><rect x="919" y="175" width="10" height="13" fill="none" stroke="#c8c8c8"/><path d="M921 178l6 7" stroke="#c8c8c8"/>
<rect x="938" y="172" width="2" height="19" class="sep"/>
<circle cx="955" cy="181" r="6" fill="none" stroke="#c8c8c8" stroke-width="3.500" stroke-dasharray="4 1"/>
<rect x="967" y="172" width="38" height="18" rx="2" fill="#2b2b2b"/><text x="973" y="186" fill="#c8c8c8">0.00</text>
<path d="M1017 175a6 6 0 0 0 0 12z" class="i"/><path d="M1018 175a6 6 0 0 1 0 12z" fill="#777"/>
<rect x="1028" y="172" width="38" height="18" rx="2" fill="#2b2b2b"/><text x="1034" y="186" fill="#c8c8c8">1.00</text>
<rect x="1069" y="172" width="17" height="19" fill="#5285a6"/><circle cx="1077.500" cy="181.500" r="7" fill="#39a5b8" stroke="#1d3a50"/><text x="1077.500" y="184.500" text-anchor="middle" font-size="7.500" font-weight="bold" fill="#123">ON</text>
<rect x="1090" y="172" width="163" height="18" rx="2" fill="#5c5c5c"/><rect x="1234" y="172" width="19" height="18" fill="#505050"/>
<text x="1094" y="186" fill="#c4c4c4" textLength="66" lengthAdjust="spacingAndGlyphs">sRGB gamma</text><path d="M1238 178h10l-5 6z" fill="#bbb"/>

<!-- Right panel -->
<rect x="1317" y="150" width="1" height="868" fill="#333"/>
<path d="M1529 154l4 5h-8z" fill="#3ec24a"/><path d="M1529 158v5l-5 3M1529 163l5 3" stroke="#ddd" fill="none"/><rect x="1522" y="164" width="5" height="5" fill="#2f5de0"/><rect x="1531" y="164" width="5" height="5" fill="#d93535"/>
<path d="M1544 168a7 7 0 1 1 14 0h-4a3 3 0 1 0-6 0z" class="te"/><path d="M1551 161l7 7h-5z" fill="#777"/>
<path d="M1565 155v13h14" fill="none" stroke="#aaa"/><path d="M1567 166l10-10M1572 156h5v5" fill="none" stroke="#39a5b8" stroke-width="1.500"/>
<g class="m"><text x="1330" y="186">Channels</text><text x="1393" y="186">Edit</text><text x="1428" y="186">Object</text><text x="1477" y="186">Show</text></g>
<text x="1324" y="206" font-weight="bold" fill="#c4c4c4">l_knee_jnt</text>
<g fill="#2b2b2b">
<rect x="1505" y="209" width="74" height="15" rx="1"/><rect x="1505" y="225" width="74" height="15" rx="1"/><rect x="1505" y="241" width="74" height="15" rx="1"/><rect x="1505" y="257" width="74" height="15" rx="1"/><rect x="1505" y="273" width="74" height="15" rx="1"/><rect x="1505" y="289" width="74" height="15" rx="1"/><rect x="1505" y="305" width="74" height="15" rx="1"/><rect x="1505" y="321" width="74" height="15" rx="1"/><rect x="1505" y="337" width="74" height="15" rx="1"/><rect x="1505" y="353" width="74" height="15" rx="1" fill="#3a3a3a"/><rect x="1505" y="369" width="74" height="15" rx="1"/>
</g>
<rect x="1505" y="369" width="7" height="15" fill="#8c8c8c"/>
<g fill="#b8b8b8" text-anchor="end" font-size="10.800"><text x="1498" y="222">Translate X</text><text x="1498" y="238">Translate Y</text><text x="1498" y="254">Translate Z</text><text x="1498" y="270">Rotate X</text><text x="1498" y="286">Rotate Y</text><text x="1498" y="302">Rotate Z</text><text x="1498" y="318">Scale X</text><text x="1498" y="334">Scale Y</text><text x="1498" y="350">Scale Z</text><text x="1498" y="366">Visibility</text><text x="1498" y="382">Radius</text></g>
<g fill="#d0d0d0" font-size="11"><text x="1514" y="221">6.837</text><text x="1514" y="237">0</text><text x="1514" y="253">0</text><text x="1514" y="269">0</text><text x="1514" y="285">84.47</text><text x="1514" y="301">0</text><text x="1514" y="317">1</text><text x="1514" y="333">1</text><text x="1514" y="349">1</text><text x="1514" y="365">on</text><text x="1514" y="381">0.81</text></g>
<g font-weight="bold" fill="#b8b8b8"><text x="1324" y="398">OUTPUTS</text><text x="1333" y="414">skinCluster5</text><text x="1333" y="430">skinCluster3</text><text x="1333" y="446">bindPose2</text></g>
<rect x="1323" y="465" width="257" height="296" fill="#2b2b2b"/>
<path d="M1408 764h85" stroke="#777" stroke-dasharray="1 2"/>
<!-- vertical tabs -->
<rect x="1585" y="152" width="14" height="866" fill="#3a3a3a"/>
<rect x="1585" y="152" width="14" height="154" fill="#444"/>
<path d="M1585 309h14M1585 419h14" stroke="#2e2e2e"/>
<text transform="translate(1586 163) rotate(90)" fill="#d0d0d0" font-size="11.500" textLength="133" lengthAdjust="spacingAndGlyphs">Channel Box / Layer Editor</text>
<text transform="translate(1586 320) rotate(90)" fill="#8a8a8a" font-size="11.500" textLength="87" lengthAdjust="spacingAndGlyphs">Modeling Toolkit</text>
<text transform="translate(1586 431) rotate(90)" fill="#8a8a8a" font-size="11.500" textLength="81" lengthAdjust="spacingAndGlyphs">Attribute Editor</text>
<!-- Layer editor -->
<rect x="1322" y="773" width="259" height="242" fill="#444" stroke="#383838"/>
<rect x="1324" y="774" width="58" height="17" fill="#444"/>
<rect x="1385" y="774" width="46" height="17" fill="#3c3c3c"/>
<text x="1334" y="787" fill="#d0d0d0">Display</text><text x="1395" y="787" fill="#7e7e7e">Anim</text>
<path d="M1323 790.500h1h1M1382 790.500h197" stroke="#383838"/>
<g class="m"><text x="1333" y="805">Layers</text><text x="1379" y="805">Options</text><text x="1436" y="805">Help</text></g>
<g>
<path d="M1483 822l6-4h5v8h-5z" class="i"/><path d="M1494 828v-8M1490 823l4-4 4 4" stroke="#39a5b8" stroke-width="1.800" fill="none"/>
<path d="M1507 822l6-4h5v8h-5z" class="i"/><path d="M1517 818v8M1513 823l4 4 4-4" stroke="#39a5b8" stroke-width="1.800" fill="none"/>
<path d="M1533 822l6-4h5v8h-5z" class="i"/><path d="M1545 817v8M1541 821h8" stroke="#39a5b8" stroke-width="2"/>
<path d="M1557 822l6-4h5v8h-5z" class="i"/><circle cx="1566" cy="819" r="3.500" class="te"/>
</g>
<rect x="1327" y="837" width="249" height="163" fill="#2b2b2b"/>
<rect x="1564" y="837" width="12" height="163" fill="#383838"/>
<path d="M1570 840l-5 5h10z" fill="#aaa"/><path d="M1570 999l-5-5h10z" fill="#aaa"/>
<rect x="1565" y="909" width="10" height="79" rx="4" fill="#5e5e5e"/>
<rect x="1327" y="980" width="237" height="20" fill="#5285a6"/>
<g fill="#333" stroke="#1c1c1c">
<rect x="1330.500" y="844.500" width="19" height="13" rx="3"/><rect x="1353.500" y="844.500" width="19" height="13" rx="3"/><rect x="1376.500" y="844.500" width="19" height="13" rx="3"/>
<rect x="1330.500" y="864.500" width="19" height="13" rx="3"/><rect x="1353.500" y="864.500" width="19" height="13" rx="3"/><rect x="1376.500" y="864.500" width="19" height="13" rx="3"/>
<rect x="1330.500" y="884.500" width="19" height="13" rx="3"/><rect x="1353.500" y="884.500" width="19" height="13" rx="3"/><rect x="1376.500" y="884.500" width="19" height="13" rx="3"/>
<rect x="1330.500" y="904.500" width="19" height="13" rx="3"/><rect x="1353.500" y="904.500" width="19" height="13" rx="3"/><rect x="1376.500" y="904.500" width="19" height="13" rx="3"/>
<rect x="1330.500" y="924.500" width="19" height="13" rx="3"/><rect x="1353.500" y="924.500" width="19" height="13" rx="3"/><rect x="1376.500" y="924.500" width="19" height="13" rx="3"/>
<rect x="1330.500" y="944.500" width="19" height="13" rx="3"/><rect x="1353.500" y="944.500" width="19" height="13" rx="3"/><rect x="1376.500" y="944.500" width="19" height="13" rx="3"/>
<rect x="1330.500" y="964.500" width="19" height="13" rx="3"/><rect x="1353.500" y="964.500" width="19" height="13" rx="3"/><rect x="1376.500" y="964.500" width="19" height="13" rx="3"/>
</g>
<g fill="#5285a6" stroke="#1d3447"><rect x="1330.500" y="984.500" width="19" height="13" rx="3"/><rect x="1353.500" y="984.500" width="19" height="13" rx="3"/><rect x="1376.500" y="984.500" width="19" height="13" rx="3"/></g>
<g fill="#e0e0e0" text-anchor="middle" font-size="11">
<text x="1340" y="855">V</text><text x="1363" y="855">P</text><text x="1340" y="875">V</text><text x="1363" y="875">P</text><text x="1340" y="895">V</text><text x="1363" y="895">P</text><text x="1340" y="915">V</text><text x="1363" y="915">P</text><text x="1340" y="935">V</text><text x="1363" y="935">P</text><text x="1340" y="955">V</text><text x="1363" y="955">P</text><text x="1340" y="975">V</text><text x="1363" y="975">P</text>
</g>
<g fill="#1b2b3a" text-anchor="middle" font-size="11"><text x="1340" y="995">V</text><text x="1363" y="995">P</text></g>
<g fill="none" stroke="#8c8c8c"><path d="M1400 857l14-14M1400 877l14-14M1400 897l14-14M1400 917l14-14M1400 937l14-14M1400 957l14-14M1400 977l14-14"/></g>
<path d="M1399.500 843v15M1399.500 863v15M1399.500 883v15M1399.500 903v15M1399.500 923v15M1399.500 943v15M1399.500 963v15" stroke="#4a4a4a"/>
<path d="M1414.500 843v15M1414.500 863v15M1414.500 883v15M1414.500 903v15M1414.500 923v15M1414.500 943v15M1414.500 963v15" stroke="#d0d0d0"/>
<rect x="1399" y="983" width="16" height="15" fill="#2b2b2b" stroke="#ddd" stroke-width=".6"/><path d="M1400 997l14-14" stroke="#ddd"/>
<g fill="#e0e0e0" font-size="10.900"><text x="1418" y="855">Boots_Lyr</text><text x="1418" y="875">Legs_Lyr</text><text x="1418" y="895">Eyebrows_Lyr</text><text x="1418" y="915">Eyeballs_Lyr</text><text x="1418" y="935">Belt_Details_Lyr</text><text x="1418" y="955">Torso_Lyr</text><text x="1418" y="975">Cornea_Lyr</text></g>
<text x="1418" y="995" fill="#0e1a24" font-size="10.900">Head_Lyr</text>
<rect x="1327" y="1000" width="237" height="13" fill="#383838"/>
<path d="M1334 1002v9l-5-4.500zM1556 1002v9l5-4.500z" fill="#aaa"/>
<rect x="1339" y="1001" width="142" height="10" rx="4" fill="#5e5e5e"/>

<!-- Timeline -->
<path d="M5 1028v30M8 1028v30" stroke="#777" stroke-dasharray="1 2"/>
<rect x="13" y="1027" width="1292" height="32" fill="#2b2b2b"/>
<rect x="19" y="1056" width="1281" height="3" fill="#3a3a3a"/>
<rect x="831" y="1027" width="8" height="33" fill="#555"/>
<path fill="none" stroke="#8a8a8a" stroke-width="1.500" d="M62 1040v15M115 1040v15M168 1040v15M222 1040v15M275 1040v15M329 1040v15M382 1040v15M435 1040v15M488 1040v15M542 1040v15M595 1040v15M648 1040v15M702 1040v15M755 1040v15M808 1040v15M862 1040v15M915 1040v15M968 1040v15M1021 1040v15M1075 1040v15M1128 1040v15M1181 1040v15M1236 1040v15M1289 1040v15"/>
<g fill="#7f7f7f" font-size="11"><text x="64" y="1037">5</text><text x="117" y="1037">10</text><text x="170" y="1037">15</text><text x="224" y="1037">20</text><text x="277" y="1037">25</text><text x="331" y="1037">30</text><text x="384" y="1037">35</text><text x="437" y="1037">40</text><text x="490" y="1037">45</text><text x="544" y="1037">50</text><text x="597" y="1037">55</text><text x="650" y="1037">60</text><text x="704" y="1037">65</text><text x="757" y="1037">70</text><text x="810" y="1037">75</text><text x="864" y="1037">80</text><text x="917" y="1037">85</text><text x="970" y="1037">90</text><text x="1023" y="1037">95</text><text x="1077" y="1037">100</text><text x="1130" y="1037">105</text><text x="1183" y="1037">110</text><text x="1238" y="1037">115</text><text x="1291" y="1037">120</text></g>
<rect x="1305" y="1027" width="294" height="32" fill="#444"/>
<text x="835" y="1051" text-anchor="middle" font-size="11" fill="#f0f0f0">77</text>
<rect x="1313" y="1033" width="87" height="18" fill="#2b2b2b"/><text x="1318" y="1047" fill="#c8c8c8">77</text>
<g fill="#b6b6b6">
<rect x="1411" y="1035" width="2" height="14"/><path d="M1420 1035v14l-6-7zM1427 1035v14l-6-7z"/>
<rect x="1436" y="1035" width="2" height="14"/><path d="M1446 1034v16l-8-8z"/>
<path d="M1470 1034v16l-8-8z"/>
<path d="M1495 1031v22l-12-11z"/>
<path d="M1505 1031l13 11-13 11z"/>
<path d="M1528 1034l8 8-8 8z"/>
<path d="M1551 1034l8 8-8 8z"/><rect x="1560" y="1035" width="2" height="14"/>
<path d="M1572 1035l6 7-6 7zM1579 1035l6 7-6 7z"/><rect x="1586" y="1035" width="2" height="14"/>
</g>
<rect x="1458" y="1034" width="3" height="16" fill="#d9773b"/><path d="M1459.500 1031v2M1459.500 1051v2" stroke="#ccc"/>
<rect x="1537" y="1034" width="3" height="16" fill="#d9773b"/><path d="M1538.500 1031v2M1538.500 1051v2" stroke="#ccc"/>

<!-- Range row -->
<path d="M5 1068v30M8 1068v30" stroke="#777" stroke-dasharray="1 2"/>
<rect x="14" y="1070" width="88" height="25" rx="2" fill="#2b2b2b"/><text x="19" y="1087" fill="#c8c8c8">1</text>
<rect x="110" y="1070" width="88" height="25" rx="2" fill="#2b2b2b"/><text x="115" y="1087" fill="#c8c8c8">1</text>
<rect x="205" y="1070" width="673" height="25" fill="#3f3f3f"/>
<rect x="209" y="1072" width="409" height="21" rx="3" fill="#5c5c5c"/>
<rect x="212" y="1075" width="14" height="15" rx="4" fill="#a0a0a0"/><rect x="600" y="1075" width="14" height="15" rx="4" fill="#a0a0a0"/>
<text x="229" y="1087" fill="#c8c8c8">1</text><text x="596" y="1087" text-anchor="end" fill="#c8c8c8">120</text>
<rect x="885" y="1070" width="88" height="25" rx="2" fill="#2b2b2b"/><text x="890" y="1087" fill="#c8c8c8">120</text>
<rect x="981" y="1070" width="88" height="25" rx="2" fill="#2b2b2b"/><text x="986" y="1087" fill="#c8c8c8">200</text>
<rect x="1074" y="1072" width="2" height="22" class="sep"/>
<path d="M1091 1080h9l-4.500 5z" fill="none" stroke="#aaa"/>
<rect x="1107.500" y="1070.500" width="101" height="24" rx="2" fill="none" stroke="#535353"/><text x="1112" y="1087" fill="#c0c0c0" textLength="86" lengthAdjust="spacingAndGlyphs">No Character Set</text>
<path d="M1220 1080h9l-4.500 5z" fill="none" stroke="#aaa"/>
<rect x="1236.500" y="1070.500" width="101" height="24" rx="2" fill="none" stroke="#535353"/><text x="1241" y="1087" fill="#c0c0c0" textLength="74" lengthAdjust="spacingAndGlyphs">No Anim Layer</text>
<rect x="1347" y="1072" width="2" height="22" class="sep"/>
<rect x="1362" y="1072" width="94" height="19" rx="2" fill="#5c5c5c"/><rect x="1437" y="1072" width="19" height="19" fill="#505050"/>
<text x="1365" y="1087" fill="#c8c8c8">24 fps</text><path d="M1441 1079h10l-5 6z" fill="#bbb"/>
<path d="M1473 1083v-5h11M1485 1078l-3-3v6zM1486 1081v5h-11M1474 1086l3-3v6z" fill="none" stroke="#c8c8c8" stroke-width="1.800"/>
<path d="M1502 1071h-5v23h5M1515 1071h5v23h-5" fill="none" stroke="#3fe03f" stroke-width="1.500"/><rect x="1501" y="1076" width="15" height="14" fill="#5b5b5b"/><path d="M1503 1079h11M1503 1083h11M1503 1087h11" stroke="#444"/>
<rect x="1529" y="1072" width="2" height="22" class="sep"/>
<circle cx="1552" cy="1083" r="8" fill="none" stroke="#c8c8c8" stroke-width="1.500" stroke-dasharray="9 2"/><path d="M1552 1075v16" stroke="#d9773b" stroke-width="1.500"/><path d="M1548 1083h8" stroke="#c8c8c8"/>
<circle cx="1575" cy="1074" r="3.500" fill="none" stroke="#c8c8c8" stroke-width="1.500"/><circle cx="1585" cy="1076" r="2" fill="#e07f3a"/><path d="M1584 1079l-5 4 4 3-1 6M1583 1086l6 5M1580 1082l-5 1M1584 1080l5 3" fill="none" stroke="#e07f3a" stroke-width="2"/>

<!-- MEL row -->
<path d="M5 1104v27M8 1104v27" stroke="#777" stroke-dasharray="1 2"/>
<text x="24" y="1122" fill="#ddd" font-size="11">MEL</text>
<rect x="59" y="1107" width="547" height="22" rx="2" fill="#2b2b2b"/>
<path d="M610 1112v12" stroke="#888" stroke-dasharray="1 2"/>
<rect x="614" y="1107" width="954" height="23" fill="#2b2b2b"/>
<rect x="1573" y="1109" width="19" height="19" fill="#c4c4c4"/><rect x="1573" y="1109" width="19" height="3" fill="#888"/><text x="1582.500" y="1125" text-anchor="middle" font-size="11" font-weight="bold" fill="#333">{;}</text>

<!-- help line -->
<text x="153" y="1153" font-size="11" fill="#b6b6b6" textLength="1037" lengthAdjust="spacingAndGlyphs">to rotate object(s). Shift+drag manipulator axis or plane handles to extrude components or clone objects. Ctrl+Shift+LMB+drag to constrain rotation to connected edges. Use D or INSERT to change the pivot position and axis orientation.</text>
<path d="M5 1136v20M8 1136v20" stroke="#777" stroke-dasharray="1 2"/>
<rect x="8" y="1133" width="144" height="24" fill="#fff"/>
<rect x="16" y="1139" width="15" height="16" fill="#8ed4d4"/><text x="17" y="1152" font-size="14" font-weight="bold" fill="#0b4f5b">M</text>
<path d="M33.500 1145h7v9h-7zM35.500 1145v-3h7v9h-2" fill="none" stroke="#888"/>
<rect x="78.500" y="1144.500" width="9" height="11" fill="none" stroke="#777"/>
<path d="M124 1144l11 11M135 1144l-11 11" stroke="#777"/>
</svg>
</body></html>
